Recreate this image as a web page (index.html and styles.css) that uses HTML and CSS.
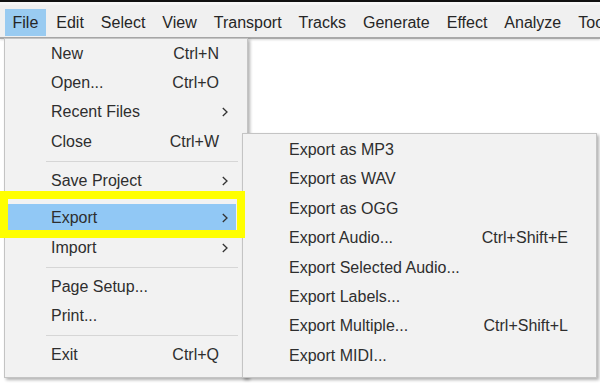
FILE: index.html
```html
<!DOCTYPE html>
<html>
<head>
<meta charset="utf-8">
<link rel="stylesheet" href="styles.css">
</head>
<body>
<div class="screen">
  <div class="topline"></div>
  <div class="topgap"></div>
  <div class="menubar">
    <div class="mb-item active">File</div>
    <div class="mb-item">Edit</div>
    <div class="mb-item">Select</div>
    <div class="mb-item">View</div>
    <div class="mb-item">Transport</div>
    <div class="mb-item">Tracks</div>
    <div class="mb-item">Generate</div>
    <div class="mb-item">Effect</div>
    <div class="mb-item">Analyze</div>
    <div class="mb-item">Tools</div>
  </div>

  <div class="menu filemenu">
    <div class="item"><span class="label">New</span><span class="sc">Ctrl+N</span></div>
    <div class="item"><span class="label">Open...</span><span class="sc">Ctrl+O</span></div>
    <div class="item"><span class="label">Recent Files</span><svg class="arrow" width="6" height="10" viewBox="0 0 6 10"><path d="M0.8 1 L5 5 L0.8 9" fill="none" stroke="#333" stroke-width="1.3"/></svg></div>
    <div class="item"><span class="label">Close</span><span class="sc">Ctrl+W</span></div>
    <div class="sep"></div>
    <div class="item"><span class="label">Save Project</span><svg class="arrow" width="6" height="10" viewBox="0 0 6 10"><path d="M0.8 1 L5 5 L0.8 9" fill="none" stroke="#333" stroke-width="1.3"/></svg></div>
    <div class="item hl"><span class="label">Export</span><svg class="arrow" width="6" height="10" viewBox="0 0 6 10"><path d="M0.8 1 L5 5 L0.8 9" fill="none" stroke="#333" stroke-width="1.3"/></svg></div>
    <div class="item"><span class="label">Import</span><svg class="arrow" width="6" height="10" viewBox="0 0 6 10"><path d="M0.8 1 L5 5 L0.8 9" fill="none" stroke="#333" stroke-width="1.3"/></svg></div>
    <div class="sep"></div>
    <div class="item"><span class="label">Page Setup...</span></div>
    <div class="item"><span class="label">Print...</span></div>
    <div class="sep"></div>
    <div class="item"><span class="label">Exit</span><span class="sc">Ctrl+Q</span></div>
  </div>

  <div class="menu submenu">
    <div class="item"><span class="label">Export as MP3</span></div>
    <div class="item"><span class="label">Export as WAV</span></div>
    <div class="item"><span class="label">Export as OGG</span></div>
    <div class="item"><span class="label">Export Audio...</span><span class="sc">Ctrl+Shift+E</span></div>
    <div class="item"><span class="label">Export Selected Audio...</span></div>
    <div class="item"><span class="label">Export Labels...</span></div>
    <div class="item"><span class="label">Export Multiple...</span><span class="sc">Ctrl+Shift+L</span></div>
    <div class="item"><span class="label">Export MIDI...</span></div>
  </div>

  <div class="callout"></div>
</div>
</body>
</html>
```

FILE: styles.css
```css
html, body {
  margin: 0;
  padding: 0;
  background: #ffffff;
}
.screen {
  position: relative;
  width: 600px;
  height: 383px;
  overflow: hidden;
  background: #ffffff;
  font-family: "Liberation Sans", Arial, sans-serif;
  font-size: 16px;
  color: #2e2e2e;
}
.topline {
  height: 2px;
  background: #111111;
}
.topgap {
  height: 3px;
  background: #f7f7f7;
}
.menubar {
  display: flex;
  align-items: stretch;
  height: 34px;
  box-sizing: border-box;
  padding: 4px 0 1px 4px;
  background: #f0f0f0;
  border-bottom: 2px solid #a9a9a9;
  box-shadow: 0 1px 2px rgba(0, 0, 0, 0.15);
  white-space: nowrap;
}
.mb-item {
  display: flex;
  align-items: center;
  padding: 0 8.5px 0 8.5px;
  color: #262626;
  flex: none;
}
.mb-item.active {
  padding: 0 7.5px 0 7.5px;
  margin-right: 2px;
  margin-left: 1px;
  background: #99cbf1;
}
.menu {
  position: absolute;
  background: #f2f2f2;
  border: 1px solid #c4c4c4;
  box-shadow: 2px 2px 3px rgba(0, 0, 0, 0.3);
  box-sizing: border-box;
}
.filemenu {
  left: 4px;
  top: 38px;
  width: 244px;
  height: 340px;
}
.submenu {
  left: 242px;
  top: 133px;
  width: 355px;
  height: 245px;
  padding-top: 1.3px;
}
.item {
  display: flex;
  align-items: center;
  height: 29.4px;
  padding-left: 46px;
  white-space: nowrap;
}
.item .label {
  flex: 1;
}
.filemenu .sc {
  margin-right: 28px;
}
.submenu .sc {
  margin-right: 28px;
}
.arrow {
  margin-right: 19px;
  flex: none;
}
.item.hl {
  height: 26px;
  box-sizing: border-box;
  padding-top: 3px;
  margin: 8.4px 11px 3.4px 3px;
  padding-left: 43px;
  background: #91c8f5;
}
.item.hl .arrow {
  margin-right: 8px;
}
.sep {
  height: 1px;
  background: #d6d6d6;
  margin: 4.3px 9px 4.3px 41px;
}
.callout {
  position: absolute;
  left: 0;
  top: 191px;
  width: 245px;
  height: 47px;
  box-sizing: border-box;
  border: 8px solid #ffff00;
}
```
